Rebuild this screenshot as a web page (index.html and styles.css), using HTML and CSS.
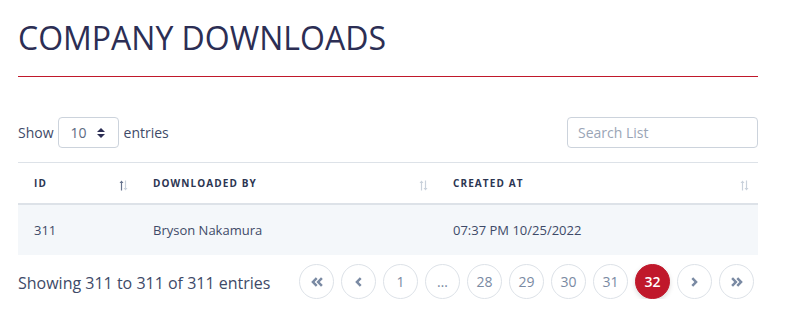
FILE: index.html
```html
<!DOCTYPE html>
<html lang="en">
<head>
    <meta charset="UTF-8">
    <title>Company Downloads</title>
    <link rel="stylesheet" href="styles.css">
</head>
<body>
    <div class="page">
        <h1 class="title">COMPANY DOWNLOADS</h1>

        <!-- Table toolbar -->
        <div class="toolbar">
            <label class="length">
                Show
                <span class="select">10
                    <svg width="8" height="10" viewBox="0 0 8 10"><path d="M4 0L8 4H0z M4 10L0 6H8z" fill="#2c2e54"/></svg>
                </span>
                entries
            </label>
            <input class="search" type="text" placeholder="Search List">
        </div>

        <table class="list">
            <thead>
                <tr>
                    <th class="col-id">ID
                        <svg class="sort" width="9" height="11" viewBox="0 0 9 11"><path d="M2.5 0.5L4.5 3H3.1V10.5H1.9V3H0.5z" fill="#66738d"/><path d="M6.5 10.5L4.5 8H5.9V0.5H7.1V8H8.5z" fill="#c9d1db"/></svg>
                    </th>
                    <th class="col-by">DOWNLOADED BY
                        <svg class="sort" width="9" height="11" viewBox="0 0 9 11"><path d="M2.5 0.5L4.5 3H3.1V10.5H1.9V3H0.5z" fill="#c9d1db"/><path d="M6.5 10.5L4.5 8H5.9V0.5H7.1V8H8.5z" fill="#c9d1db"/></svg>
                    </th>
                    <th class="col-at">CREATED AT
                        <svg class="sort" width="9" height="11" viewBox="0 0 9 11"><path d="M2.5 0.5L4.5 3H3.1V10.5H1.9V3H0.5z" fill="#c9d1db"/><path d="M6.5 10.5L4.5 8H5.9V0.5H7.1V8H8.5z" fill="#c9d1db"/></svg>
                    </th>
                </tr>
            </thead>
            <tbody>
                <tr>
                    <td>311</td>
                    <td>Bryson Nakamura</td>
                    <td>07:37 PM 10/25/2022</td>
                </tr>
            </tbody>
        </table>

        <div class="footer">
            <div class="info">Showing 311 to 311 of 311 entries</div>
            <div class="pager">
                <a class="pg"><svg width="12" height="10" viewBox="0 0 12 10"><path d="M4.8 0.3L0.2 5L4.8 9.7L6.6 8L3.6 5L6.6 2z M10 0.3L5.4 5L10 9.7L11.8 8L8.8 5L11.8 2z" fill="#7a8aa3"/></svg></a>
                <a class="pg"><svg width="7" height="10" viewBox="0 0 7 10"><path d="M4.8 0.3L0.2 5L4.8 9.7L6.6 8L3.6 5L6.6 2z" fill="#7a8aa3"/></svg></a>
                <a class="pg">1</a>
                <a class="pg">…</a>
                <a class="pg">28</a>
                <a class="pg">29</a>
                <a class="pg">30</a>
                <a class="pg">31</a>
                <a class="pg active">32</a>
                <a class="pg"><svg width="7" height="10" viewBox="0 0 7 10"><path d="M2.2 0.3L6.8 5L2.2 9.7L0.4 8L3.4 5L0.4 2z" fill="#7a8aa3"/></svg></a>
                <a class="pg"><svg width="12" height="10" viewBox="0 0 12 10"><path d="M2 0.3L6.6 5L2 9.7L0.2 8L3.2 5L0.2 2z M7.2 0.3L11.8 5L7.2 9.7L5.4 8L8.4 5L5.4 2z" fill="#7a8aa3"/></svg></a>
            </div>
        </div>
    </div>
</body>
</html>
```

FILE: styles.css
```css
body {
    margin: 0;
    font-family: "Open Sans", Arial, sans-serif;
    background-color: #fff;
    color: #3e4a68;
}
.page {
    width: 740px;
    padding: 14px 0 0 18px;
}
.title {
    margin: 0;
    font-size: 32px;
    font-weight: 400;
    color: #2c2e54;
    line-height: 48px;
    padding-bottom: 14px;
    border-bottom: 1px solid #c0182b;
}
/* Toolbar */
.toolbar {
    display: flex;
    justify-content: space-between;
    align-items: center;
    margin-top: 40px;
    height: 31px;
}
.length {
    display: flex;
    align-items: center;
    font-size: 14px;
    color: #3e4a68;
}
.select {
    display: inline-flex;
    align-items: center;
    justify-content: space-between;
    box-sizing: border-box;
    width: 61px;
    height: 31px;
    margin: 0 5px 0 4px;
    padding: 0 13px 0 12px;
    border: 1px solid #ccd3dc;
    border-radius: 4px;
    font-size: 14px;
    color: #5d6a82;
}
.search {
    box-sizing: border-box;
    width: 191px;
    height: 31px;
    padding: 0 10px;
    border: 1px solid #ccd3dc;
    border-radius: 4px;
    font-family: inherit;
    font-size: 14px;
    outline: none;
}
.search::placeholder {
    color: #9aa5b6;
}
/* Table */
.list {
    width: 100%;
    margin-top: 14px;
    border-collapse: collapse;
}
.list th {
    position: relative;
    height: 40px;
    padding: 0 16px;
    border-top: 1px solid #dde2e8;
    border-bottom: 2px solid #dde2e8;
    text-align: left;
    font-size: 10px;
    font-weight: 700;
    letter-spacing: 1.1px;
    color: #2c3552;
}
.list .col-id { width: 87px; }
.list .col-by { width: 268px; }
.sort {
    position: absolute;
    right: 9px;
    top: 17px;
}
.list td {
    height: 50px;
    padding: 0 16px;
    background-color: #f4f7fa;
    font-size: 13px;
    color: #3e4a68;
}
/* Footer */
.footer {
    display: flex;
    justify-content: space-between;
    align-items: center;
    margin-top: 9px;
}
.info {
    font-size: 16px;
    padding-top: 3px;
}
.pager {
    display: flex;
    gap: 7px;
    padding-right: 4px;
}
.pg {
    display: flex;
    align-items: center;
    justify-content: center;
    box-sizing: border-box;
    width: 35px;
    height: 35px;
    border: 1px solid #dde2e8;
    border-radius: 50%;
    font-size: 14px;
    color: #7a8aa3;
}
.pg.active {
    background-color: #c0182b;
    border-color: #c0182b;
    color: #fff;
    font-weight: 600;
    box-shadow: 0 2px 5px rgba(0, 0, 0, 0.15);
}
```
